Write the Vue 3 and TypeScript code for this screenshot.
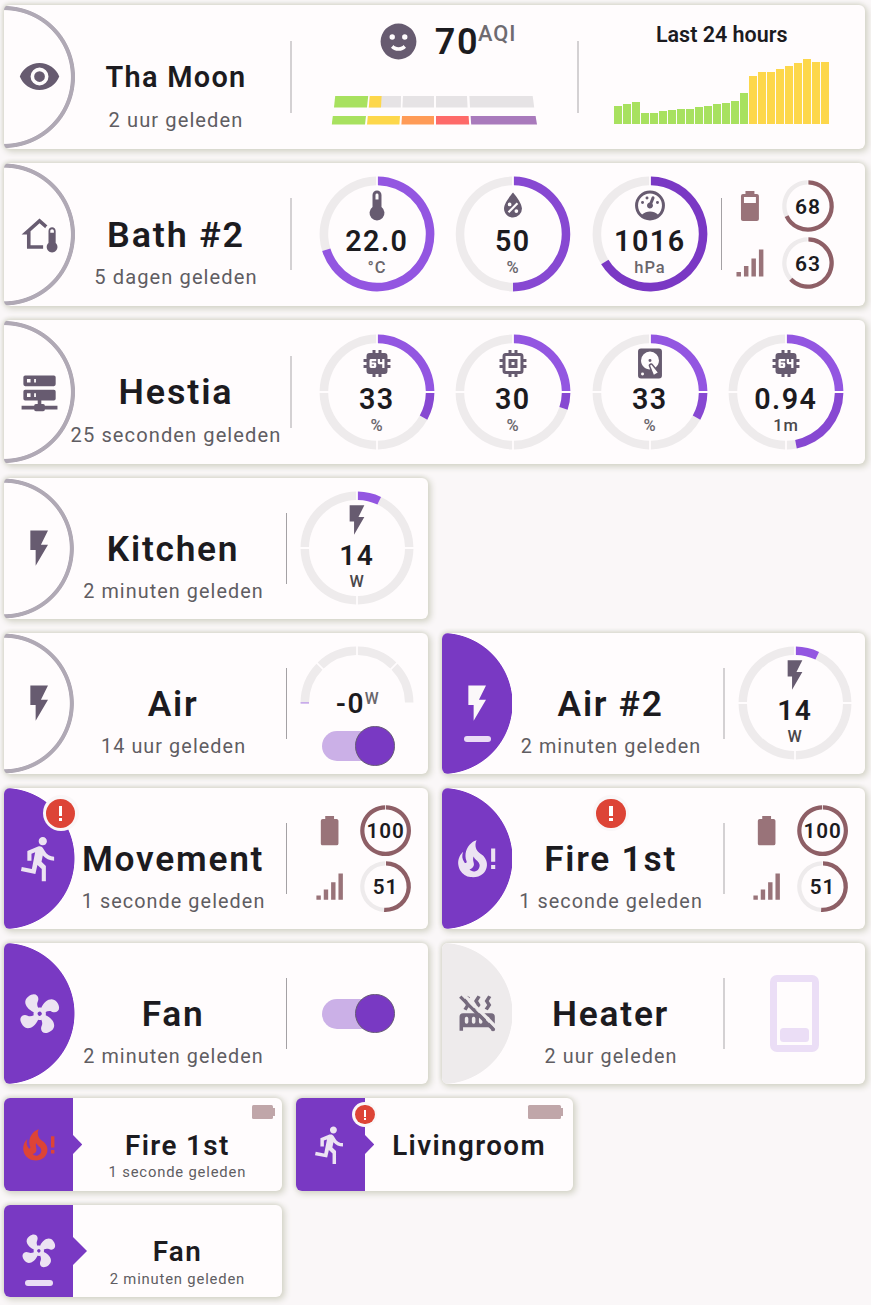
<script setup lang="ts">
import { defineComponent, h } from 'vue'

type Seg = { d: string; c: string }
interface Gauge { icon: string; value: string; unit: string; pct: number; quarters?: boolean; colors: string[] }
interface Status { battery: string; level: number; signal: number }
interface Tile {
  name: string
  ago: string
  icon: string
  iconScale?: number
  look: 'ring' | 'on' | 'off'
  bar?: boolean
  badge?: 'avatar' | 'title'
  gauges?: Gauge[]
  status?: Status
  kind?: 'aqi' | 'power' | 'switch' | 'slider'
  thin?: boolean
}

const paths: Record<string, string> = {
  eye: 'M12,9A3,3 0 0,0 9,12A3,3 0 0,0 12,15A3,3 0 0,0 15,12A3,3 0 0,0 12,9M12,17A5,5 0 0,1 7,12A5,5 0 0,1 12,7A5,5 0 0,1 17,12A5,5 0 0,1 12,17M12,4.5C7,4.5 2.73,7.61 1,12C2.73,16.39 7,19.5 12,19.5C17,19.5 21.27,16.39 23,12C21.27,7.61 17,4.5 12,4.5Z',
  homeTemp: 'M19 8C20.11 8 21 8.9 21 10V16.76C21.61 17.31 22 18.11 22 19C22 20.66 20.66 22 19 22C17.34 22 16 20.66 16 19C16 18.11 16.39 17.31 17 16.76V10C17 8.9 17.9 8 19 8M19 9C18.45 9 18 9.45 18 10V11H20V10C20 9.45 19.55 9 19 9M12 5.69L7 10.19V18H14V20H5V12H2L12 3L16.4 6.96C15.84 7.4 15.4 8 15.18 8.55L12 5.69Z',
  server: 'M13,19H14A1,1 0 0,1 15,20H22V22H15A1,1 0 0,1 14,23H10A1,1 0 0,1 9,22H2V20H9A1,1 0 0,1 10,19H11V17H4A1,1 0 0,1 3,16V12A1,1 0 0,1 4,11H20A1,1 0 0,1 21,12V16A1,1 0 0,1 20,17H13V19M4,3H20A1,1 0 0,1 21,4V8A1,1 0 0,1 20,9H4A1,1 0 0,1 3,8V4A1,1 0 0,1 4,3M9,7H10V5H9V7M9,15H10V13H9V15M5,5V7H7V5H5M5,13V15H7V13H5Z',
  flash: 'M7,2V13H10V22L17,10H13L17,2H7Z',
  emoticon: 'M12,2A10,10 0 0,0 2,12A10,10 0 0,0 12,22A10,10 0 0,0 22,12A10,10 0 0,0 12,2M15.5,8A1.5,1.5 0 0,1 17,9.5A1.5,1.5 0 0,1 15.5,11A1.5,1.5 0 0,1 14,9.5A1.5,1.5 0 0,1 15.5,8M8.5,8A1.5,1.5 0 0,1 10,9.5A1.5,1.5 0 0,1 8.5,11A1.5,1.5 0 0,1 7,9.5A1.5,1.5 0 0,1 8.5,8M12,17.23C10.25,17.23 8.71,16.5 7.81,15.42L9.23,14C9.68,14.72 10.75,15.23 12,15.23C13.25,15.23 14.32,14.72 14.77,14L16.19,15.42C15.29,16.5 13.75,17.23 12,17.23Z',
  thermometer: 'M15 13V5A3 3 0 0 0 9 5V13A5 5 0 1 0 15 13M12 4A1 1 0 0 1 13 5V8H11V5A1 1 0 0 1 12 4Z',
  humidity: 'M12,3.25C12,3.25 6,10 6,14C6,17.32 8.69,20 12,20A6,6 0 0,0 18,14C18,10 12,3.25 12,3.25M14.47,9.97L15.53,11.03L9.53,17.03L8.47,15.97M9.75,10A1.25,1.25 0 0,1 11,11.25A1.25,1.25 0 0,1 9.75,12.5A1.25,1.25 0 0,1 8.5,11.25A1.25,1.25 0 0,1 9.75,10M14.25,14.5A1.25,1.25 0 0,1 15.5,15.75A1.25,1.25 0 0,1 14.25,17A1.25,1.25 0 0,1 13,15.75A1.25,1.25 0 0,1 14.25,14.5Z',
  gauge: 'M12,2A10,10 0 0,0 2,12A10,10 0 0,0 12,22A10,10 0 0,0 22,12A10,10 0 0,0 12,2M12,4A8,8 0 0,1 20,12C20,14.4 19,16.5 17.3,18C15.9,16.7 14,16 12,16C10,16 8.2,16.7 6.7,18C5,16.5 4,14.4 4,12A8,8 0 0,1 12,4M14,5.89C13.62,5.9 13.26,6.15 13.1,6.54L11.81,9.77L11.71,10C11,10.13 10.41,10.6 10.14,11.26C9.73,12.29 10.23,13.45 11.26,13.86C12.29,14.27 13.45,13.77 13.86,12.74C14.12,12.08 14,11.32 13.57,10.76L13.67,10.5L14.96,7.29L14.97,7.26C15.17,6.75 14.92,6.17 14.41,5.96C14.28,5.91 14.15,5.89 14,5.89M10,6A1,1 0 0,0 9,7A1,1 0 0,0 10,8A1,1 0 0,0 11,7A1,1 0 0,0 10,6M7,9A1,1 0 0,0 6,10A1,1 0 0,0 7,11A1,1 0 0,0 8,10A1,1 0 0,0 7,9M17,9A1,1 0 0,0 16,10A1,1 0 0,0 17,11A1,1 0 0,0 18,10A1,1 0 0,0 17,9Z',
  cpu64: 'M9,3V5H7A2,2 0 0,0 5,7V9H3V11H5V13H3V15H5V17A2,2 0 0,0 7,19H9V21H11V19H13V21H15V19H17A2,2 0 0,0 19,17V15H21V13H19V11H21V9H19V7A2,2 0 0,0 17,5H15V3H13V5H11V3M8,9H11.5V10.5H8.5V11.25H10.5A1,1 0 0,1 11.5,12.25V14A1,1 0 0,1 10.5,15H8A1,1 0 0,1 7,14V10A1,1 0 0,1 8,9M12.5,9H14V11H15.5V9H17V15H15.5V12.5H13.5A1,1 0 0,1 12.5,11.5M8.5,12.75V13.5H10V12.75',
  memory: 'M17,17H7V7H17M21,11V9H19V7C19,5.89 18.1,5 17,5H15V3H13V5H11V3H9V5H7C5.89,5 5,5.89 5,7V9H3V11H5V13H3V15H5V17A2,2 0 0,0 7,19H9V21H11V19H13V21H15V19H17A2,2 0 0,0 19,17V15H21V13H19V11M13,13H11V11H13M15,9H9V15H15V9Z',
  disk: 'M6,2H18A2,2 0 0,1 20,4V20A2,2 0 0,1 18,22H6A2,2 0 0,1 4,20V4A2,2 0 0,1 6,2M12,4A6,6 0 0,0 6,10C6,13.31 8.69,16 12.1,16L11.22,13.77C10.95,13.29 11.11,12.68 11.59,12.4L12.45,11.9C12.93,11.63 13.54,11.79 13.82,12.27L15.74,14.69C17.12,13.59 18,11.9 18,10A6,6 0 0,0 12,4M12,9A1,1 0 0,1 13,10A1,1 0 0,1 12,11A1,1 0 0,1 11,10A1,1 0 0,1 12,9M7,18A1,1 0 0,0 6,19A1,1 0 0,0 7,20A1,1 0 0,0 8,19A1,1 0 0,0 7,18M12.09,13.27L14.58,19.58L17.17,18.08L12.95,12.77L12.09,13.27Z',
  battery70: 'M16,10H8V6H16M16.67,4H15V2H9V4H7.33A1.33,1.33 0 0,0 6,5.33V20.67C6,21.4 6.6,22 7.33,22H16.67A1.33,1.33 0 0,0 18,20.67V5.33C18,4.6 17.4,4 16.67,4Z',
  battery: 'M16.67,4H15V2H9V4H7.33A1.33,1.33 0 0,0 6,5.33V20.67C6,21.4 6.6,22 7.33,22H16.67A1.33,1.33 0 0,0 18,20.67V5.33C18,4.6 17.4,4 16.67,4Z',
  signal: 'M3,21H6V18H3M8,21H11V14H8M13,21H16V9H13M18,21H21V3H18V21Z',
  run: 'M13.5,5.5C14.59,5.5 15.5,4.58 15.5,3.5C15.5,2.38 14.59,1.5 13.5,1.5C12.39,1.5 11.5,2.38 11.5,3.5C11.5,4.58 12.39,5.5 13.5,5.5M9.89,19.38L10.89,15L13,17V23H15V15.5L12.89,13.5L13.5,10.5C14.79,12 16.79,13 19,13V11C17.09,11 15.5,10 14.69,8.58L13.69,7C13.29,6.38 12.69,6 12,6C11.69,6 11.5,6.08 11.19,6.08L6,8.28V13H8V9.58L9.79,8.88L8.19,17L3.29,16L2.89,18L9.89,19.38Z',
  fan: 'M12,11A1,1 0 0,0 11,12A1,1 0 0,0 12,13A1,1 0 0,0 13,12A1,1 0 0,0 12,11M12.5,2C17,2 17.11,5.57 14.75,6.75C13.76,7.24 13.32,8.29 13.13,9.22C13.61,9.42 14.03,9.73 14.35,10.13C18.05,8.13 22.03,8.92 22.03,12.5C22.03,17 18.46,17.1 17.28,14.73C16.78,13.74 15.72,13.3 14.79,13.11C14.59,13.59 14.28,14 13.88,14.34C15.87,18.03 15.08,22 11.5,22C7,22 6.91,18.42 9.27,17.24C10.25,16.75 10.69,15.71 10.89,14.79C10.4,14.59 9.97,14.27 9.65,13.87C5.96,15.85 2,15.07 2,11.5C2,7 5.56,6.89 6.74,9.26C7.24,10.25 8.29,10.68 9.22,10.87C9.41,10.39 9.73,9.97 10.14,9.65C8.15,5.96 8.94,2 12.5,2Z',
  fire: 'M15.66 11.2C15.43 10.9 15.15 10.64 14.89 10.38C14.22 9.78 13.46 9.35 12.82 8.72C11.33 7.26 11 4.85 11.95 3C11 3.23 10.17 3.75 9.46 4.32C6.87 6.4 5.85 10.07 7.07 13.22C7.11 13.32 7.15 13.42 7.15 13.55C7.15 13.77 7 13.97 6.8 14.05C6.57 14.15 6.33 14.09 6.14 13.93C6.08 13.88 6.04 13.83 6 13.76C4.87 12.33 4.69 10.28 5.45 8.64C3.78 10 2.87 12.3 3 14.47C3.06 14.97 3.12 15.47 3.29 15.97C3.43 16.57 3.7 17.17 4 17.7C5.08 19.43 6.95 20.67 8.96 20.92C11.1 21.19 13.39 20.8 15.03 19.32C16.86 17.66 17.5 15 16.56 12.72L16.43 12.46C16.22 12 15.66 11.2 15.66 11.2M12.5 17.5C12.22 17.74 11.76 18 11.4 18.1C10.28 18.5 9.16 17.94 8.5 17.28C9.69 17 10.4 16.12 10.61 15.23C10.78 14.43 10.46 13.77 10.33 13C10.21 12.26 10.23 11.63 10.5 10.94C10.69 11.32 10.89 11.7 11.13 12C11.9 13 13.11 13.44 13.37 14.8C13.41 14.94 13.43 15.08 13.43 15.23C13.46 16.05 13.1 16.95 12.5 17.5ZM19 7V13.5H21V7M19 17H21V15H19Z',
  radiator: 'M7.95,3L6.53,5.19L7.95,7.4H7.94L5.95,10.5L4.22,9.6L5.64,7.39L4.22,5.19L6.22,2.09L7.95,3M13.95,2.89L12.53,5.1L13.95,7.3L13.94,7.31L11.95,10.4L10.22,9.5L11.64,7.3L10.22,5.1L12.22,2L13.95,2.89M20,2.89L18.56,5.1L20,7.3V7.31L18,10.4L16.25,9.5L17.67,7.3L16.25,5.1L18.25,2L20,2.89M2,22V14A2,2 0 0,1 4,12H20A2,2 0 0,1 22,14V22H20V20H4V22H2M6,14A1,1 0 0,0 5,15V17A1,1 0 0,0 6,18A1,1 0 0,0 7,17V15A1,1 0 0,0 6,14M10,14A1,1 0 0,0 9,15V17A1,1 0 0,0 10,18A1,1 0 0,0 11,17V15A1,1 0 0,0 10,14M14,14A1,1 0 0,0 13,15V17A1,1 0 0,0 14,18A1,1 0 0,0 15,17V15A1,1 0 0,0 14,14M18,14A1,1 0 0,0 17,15V17A1,1 0 0,0 18,18A1,1 0 0,0 19,17V15A1,1 0 0,0 18,14Z',
}

/** 24-unit icon; the radiator gets a slash, the fan is caught mid-turn. */
const Glyph = defineComponent({
  props: { name: { type: String, required: true }, size: { type: Number, required: true } },
  setup: (p) => () =>
    h('svg', { class: 'glyph', width: p.size, height: p.size, viewBox: '0 0 24 24', fill: 'currentColor' }, [
      h('path', { d: paths[p.name], 'fill-rule': 'evenodd', transform: p.name === 'fan' ? 'rotate(-37 12 12)' : undefined }),
      ...(p.name === 'radiator'
        ? [
            h('path', { d: 'M3 0.2L23.6 20.8', stroke: '#eeebec', 'stroke-width': 1.9, fill: 'none' }),
            h('path', { d: 'M2.4 2.6L21.6 21.8', stroke: 'currentColor', 'stroke-width': 1.8, fill: 'none' }),
          ]
        : []),
    ]),
})

/** Arc band between two clockwise angles, with flat ends inset by half a gap. */
function band(r: number, w: number, a: number, b: number, gapA = 0, gapB = 0): string {
  const pt = (rad: number, deg: number, off: number) => {
    const t = (deg * Math.PI) / 180 + off / rad
    return `${(rad * Math.sin(t)).toFixed(2)} ${(-rad * Math.cos(t)).toFixed(2)}`
  }
  const big = b - a > 180 ? 1 : 0
  const q = r - w
  return `M${pt(r, a, gapA)}A${r} ${r} 0 ${big} 1 ${pt(r, b, -gapB)}L${pt(q, b, -gapB)}A${q} ${q} 0 ${big} 0 ${pt(q, a, gapA)}Z`
}

const TRACK = '#eeebec'

function gaugeSegs(g: Gauge): Seg[] {
  const end = g.pct * 3.6
  const out: Seg[] = []
  const step = g.quarters ? 90 : 360
  for (let i = 0; i < 360 / step; i++) {
    const a = i * step
    const b = a + step
    if (end <= a) out.push({ d: band(57.4, 8.6, a, b, 0.9, 0.9), c: TRACK })
    else if (end >= b) out.push({ d: band(57.4, 8.6, a, b, 0.9, 0.9), c: g.colors[i] })
    else {
      out.push({ d: band(57.4, 8.6, end, b, 0, 0.9), c: TRACK })
      out.push({ d: band(57.4, 8.6, a, end, 0.9, 0), c: g.colors[i] })
    }
  }
  return out
}

function miniSegs(v: number): Seg[] {
  const fill = '#8e5f66'
  if (v >= 100) return [{ d: band(25.8, 4.3, 0, 360, 0.4, 0.4), c: fill }]
  return [
    { d: band(25.8, 4.3, v * 3.6, 360, 0, 0.4), c: TRACK },
    { d: band(25.8, 4.3, 0, v * 3.6, 0.4, 0), c: fill },
  ]
}

const halfArc = [0, 1, 2, 3].map((i) =>
  band(57.4, 8.6, -90 + i * 45, -45 + i * 45, i === 0 ? 0.6 : 0.9, i === 3 ? 0.6 : 0.9),
)

const light = '#9356e1'
const mid = '#8748d2'
const deep = '#7a38c4'

const wide: Tile[] = [
  { name: 'Tha Moon', ago: '2 uur geleden', icon: 'eye', look: 'ring', kind: 'aqi' },
  {
    name: 'Bath #2', ago: '5 dagen geleden', icon: 'homeTemp', look: 'ring',
    gauges: [
      { icon: 'thermometer', value: '22.0', unit: '°C', pct: 70.2, colors: [light] },
      { icon: 'humidity', value: '50', unit: '%', pct: 50, colors: [mid] },
      { icon: 'gauge', value: '1016', unit: 'hPa', pct: 66.2, colors: [deep] },
    ],
    status: { battery: 'battery70', level: 68, signal: 63 },
  },
  {
    name: 'Hestia', ago: '25 seconden geleden', icon: 'server', look: 'ring',
    gauges: [
      { icon: 'cpu64', value: '33', unit: '%', pct: 33, quarters: true, colors: [light, mid] },
      { icon: 'memory', value: '30', unit: '%', pct: 30, quarters: true, colors: [light, mid] },
      { icon: 'disk', value: '33', unit: '%', pct: 33, quarters: true, colors: [light, mid] },
      { icon: 'cpu64', value: '0.94', unit: '1m', pct: 47, quarters: true, colors: [light, mid] },
    ],
  },
]

const watt: Gauge = { icon: 'flash', value: '14', unit: 'W', pct: 7, quarters: true, colors: [light] }

const half: Tile[] = [
  { name: 'Kitchen', ago: '2 minuten geleden', icon: 'flash', look: 'ring', gauges: [watt], thin: true },
  { name: 'Air', ago: '14 uur geleden', icon: 'flash', look: 'ring', kind: 'power', thin: true },
  { name: 'Air #2', ago: '2 minuten geleden', icon: 'flash', look: 'on', bar: true, gauges: [watt] },
  { name: 'Movement', ago: '1 seconde geleden', icon: 'run', iconScale: 0.35, look: 'on', badge: 'avatar', status: { battery: 'battery', level: 100, signal: 51 }, thin: true },
  { name: 'Fire 1st', ago: '1 seconde geleden', icon: 'fire', iconScale: 0.35, look: 'on', badge: 'title', status: { battery: 'battery', level: 100, signal: 51 } },
  { name: 'Fan', ago: '2 minuten geleden', icon: 'fan', iconScale: 0.35, look: 'on', kind: 'switch', thin: true },
  { name: 'Heater', ago: '2 uur geleden', icon: 'radiator', look: 'off', kind: 'slider' },
]

interface Chip { name: string; ago?: string; icon: string; alert?: boolean; battery?: number; inset?: number; badge?: boolean; bar?: boolean }
const chips: Chip[] = [
  { name: 'Fire 1st', ago: '1 seconde geleden', icon: 'fire', alert: true, battery: 23.3, inset: 6.7 },
  { name: 'Livingroom', icon: 'run', battery: 35, inset: 10.3, badge: true },
  { name: 'Fan', ago: '2 minuten geleden', icon: 'fan', bar: true },
]

const rows = [
  { tiles: wide, cls: 'wide', h: 143.5 },
  { tiles: half, cls: 'half', h: 141.17 },
]

const scaleColors = ['#a8e15f', '#fdd74b', '#ff9b57', '#fe6a69', '#a97abc']
const scaleTop = ['M335.2 96H368.2L367 107.4H334Z', 'M369.8 96H401L400.8 107.4H368.8Z', 'M403 96H434V107.4H402.4Z', 'M436 96H467L467.6 107.4H436Z', 'M469.4 96H532.7L534.2 107.4H470Z']
const scaleBottom = ['M332.8 116H366L365 124.4H331.8Z', 'M367.8 116H400L399.4 124.4H367Z', 'M402 116H434V124.4H401.4Z', 'M436 116H468.6L469.2 124.4H436Z', 'M470.6 116H535.6L537 124.4H471.2Z']

const history = [17.7, 19.8, 21.7, 11, 11, 12.9, 13.9, 14.8, 14.8, 16.7, 17.8, 19.8, 20.8, 22.9, 30.9, 48, 52, 52, 54.6, 58, 60.8, 65.3, 62, 62]
</script>

<template>
  <main class="board">
    <section v-for="row in rows" :key="row.cls" class="grid" :class="row.cls">
      <article v-for="t in row.tiles" :key="t.name" class="card" :class="[t.name === 'Kitchen' ? 'solo' : '', t.kind ? 'is-' + t.kind : '']">
        <div class="avatar" :class="t.look">
          <Glyph :name="t.icon" :size="row.h * (t.iconScale ?? 0.3)" />
          <span v-if="t.bar" class="pill" />
          <span v-if="t.badge === 'avatar'" class="badge"><i /></span>
        </div>
        <div class="title">
          <h2>{{ t.name }}</h2>
          <p>{{ t.ago }}</p>
          <span v-if="t.badge === 'title'" class="badge"><i /></span>
        </div>
        <div class="rule" :class="{ thin: t.thin }" />

        <template v-if="t.kind === 'aqi'">
          <div class="aqi">
            <div class="reading">
              <Glyph name="emoticon" :size="43" />
              <strong>70</strong><sup>AQI</sup>
            </div>
            <svg width="210" height="32" viewBox="330 94 210 32">
              <path v-for="(d, i) in scaleTop" :key="i" :d="d" :fill="i === 0 ? scaleColors[0] : '#e6e3e5'" />
              <path d="M369.8 96H381.6L381 107.4H368.8Z" :fill="scaleColors[1]" />
              <path v-for="(d, i) in scaleBottom" :key="'b' + i" :d="d" :fill="scaleColors[i]" />
            </svg>
          </div>
          <div class="rule second" />
          <div class="history">
            <h3>Last 24 hours</h3>
            <div class="bars">
              <b v-for="(v, i) in history" :key="i" :class="{ hot: i > 14 }" :style="{ height: v + 'px' }" />
            </div>
          </div>
        </template>

        <div v-if="t.gauges" class="gauges">
          <svg v-for="(g, i) in t.gauges" :key="i" class="gauge" viewBox="-60 -60 120 120">
            <path v-for="(s, k) in gaugeSegs(g)" :key="k" :d="s.d" :fill="s.c" />
            <g class="dark" transform="translate(0 -28.5) scale(1.495) translate(-12 -12)">
              <path :d="paths[g.icon]" fill-rule="evenodd" />
            </g>
            <text class="val" x="-0.2" y="17.4">{{ g.value }}</text>
            <text class="unit" :class="{ strong: g.unit === 'W' || g.unit === '1m' }" x="0" :y="g.unit === 'W' ? 39.5 : 38.9">{{ g.unit }}</text>
          </svg>
        </div>

        <template v-if="t.status">
          <div v-if="t.gauges" class="rule thin" />
          <div class="status">
            <template v-for="(v, k) in [t.status.level, t.status.signal]" :key="k">
              <Glyph :name="k ? 'signal' : t.status.battery" :size="row.h / 4" />
              <svg class="mini" viewBox="-26 -26 52 52">
                <path v-for="(s, j) in miniSegs(v)" :key="j" :d="s.d" :fill="s.c" />
                <text y="7.8">{{ v }}</text>
              </svg>
            </template>
          </div>
        </template>

        <div v-if="t.kind === 'power'" class="power">
          <svg class="arc" viewBox="-60 -60 120 62">
            <path v-for="(d, i) in halfArc" :key="i" :d="d" :fill="TRACK" />
            <rect x="-57.4" y="-1" width="8.6" height="1.7" fill="#c8aaea" />
          </svg>
          <div class="amount"><strong>-0</strong><sup>W</sup></div>
          <div class="switch"><i /></div>
        </div>
        <div v-if="t.kind === 'switch'" class="side"><div class="switch"><i /></div></div>
        <div v-if="t.kind === 'slider'" class="side"><div class="slider"><i /></div></div>
      </article>
    </section>

    <section class="grid third">
      <article v-for="c in chips" :key="c.name" class="card" :class="{ last: c.bar }">
        <div class="flag" :class="{ alert: c.alert }">
          <Glyph :name="c.icon" :size="41.65" />
          <span v-if="c.bar" class="pill" />
          <svg class="arrow" :class="{ large: c.bar }" viewBox="0 0 10 20" preserveAspectRatio="none"><path d="M0 0L10 10L0 20Z" /></svg>
          <span v-if="c.badge" class="badge small"><i /></span>
        </div>
        <div class="title">
          <h2>{{ c.name }}</h2>
          <p v-if="c.ago">{{ c.ago }}</p>
        </div>
        <div v-if="c.battery" class="cell" :style="{ width: c.battery + 'px', right: c.inset + 'px' }"><i /></div>
      </article>
    </section>
  </main>
</template>

<style>
body { margin: 0; background: #faf7f8; }
</style>

<style scoped>
.board {
  box-sizing: border-box;
  width: 871px;
  height: 1305px;
  padding: 5px 6px 0 4px;
  display: flex;
  flex-direction: column;
  gap: 14px;
  overflow: hidden;
  font-family: Roboto, "Liberation Sans", sans-serif;
  color: #1c1b1f;
}
.grid { display: grid; gap: 14px; }
.wide { grid-template-columns: 861px; grid-auto-rows: 143.5px; --h: 143.5px; }
.half { grid-template-columns: 423.5px 423.5px; grid-auto-rows: 141.17px; --h: 141.17px; }
.third { grid-template-columns: repeat(3, 277.67px); grid-auto-rows: 92.56px; }
.solo, .solo + .card, .last { grid-column: 1; }

.card {
  position: relative;
  display: flex;
  background: #fffcfd;
  border-radius: 6px;
  box-shadow: 2px 2px 6px 0.5px #d4d4c8, -1px -1px 4px #d8d8cd;
}
.glyph { display: block; flex: none; }

.avatar {
  position: relative;
  flex: none;
  box-sizing: border-box;
  width: calc(var(--h) / 2);
  height: var(--h);
  display: flex;
  align-items: center;
  justify-content: center;
  color: #675b70;
}
.avatar.ring::before {
  content: "";
  position: absolute;
  inset: 0;
  border-radius: 5px 0 0 5px;
  background: radial-gradient(circle at 0 50%, transparent calc(var(--h) * 0.463), #b0a9b5 calc(var(--h) * 0.463 + 0.8px), #b0a9b5 calc(var(--h) * 0.492), transparent calc(var(--h) * 0.492 + 0.8px));
}
.avatar.on, .avatar.off { border-radius: 6px 0 0 6px; }
.avatar.on { background: radial-gradient(circle at 0 50%, #7939c3 calc(var(--h) / 2 - 0.5px), transparent calc(var(--h) / 2 + 0.3px)); color: #ece3f2; }
.avatar.off { background: radial-gradient(circle at 0 50%, #eeebec calc(var(--h) / 2 - 0.5px), transparent calc(var(--h) / 2 + 0.3px)); color: #756a7d; }
.avatar:has(.pill) { color: #fbf8f9; }
.pill {
  position: absolute;
  left: 22px;
  top: 103.3px;
  width: 27px;
  height: 5.7px;
  border-radius: 3px;
  background: #eadcf5;
}
.badge {
  position: absolute;
  left: 38.5px;
  top: 7.5px;
  width: 36px;
  height: 36px;
  border-radius: 50%;
  background: #faf7f8;
  display: grid;
  place-items: center;
}
.badge::before {
  content: "";
  grid-area: 1 / 1;
  width: 29.6px;
  height: 29.6px;
  border-radius: 50%;
  background: #dd4436;
}
.badge i {
  grid-area: 1 / 1;
  width: 3.4px;
  height: 15px;
  background: linear-gradient(#fff 0 9.6px, transparent 9.6px 11.8px, #fff 11.8px);
}

.title { position: relative; flex: none; text-align: center; white-space: nowrap; }
.title h2, .title p { margin: 0; }
.title h2 { font-weight: 600; }
.title p { color: #605d62; }
.wide .title { width: 201px; padding-top: 50.4px; margin-left: -0.25px; }
.wide h2 { font-size: 35.9px; line-height: 44px; letter-spacing: 1.85px; }
.wide .is-aqi h2 { font-size: 28.9px; line-height: 44px; letter-spacing: 1.3px; }
.wide p { font-size: 20.1px; line-height: 24px; letter-spacing: 1.08px; padding-top: 8.2px; margin: 0 -10px; }
.half .title { width: 201px; margin-left: -2px; padding-top: 49.3px; }
.half h2 { font-size: 35.3px; line-height: 44px; letter-spacing: 1.75px; }
.half p { font-size: 19.8px; line-height: 24px; letter-spacing: 1.08px; padding-top: 9px; margin-right: -1px; }
.half .title .badge { left: 83px; }

.rule { flex: none; width: 2px; height: 72px; align-self: center; margin-left: 13.75px; background: #d4d1d3; }
.half .rule { height: 71px; margin-left: 11.5px; }
.rule.thin, .half .rule.thin { width: 1px; background: #a4a1a4; }
.half .rule.thin { margin-left: 12.5px; }
.wide .rule.thin { margin-left: 11.7px; }

.is-aqi .rule.second { margin-left: 0; }
.aqi { width: 285px; display: flex; flex-direction: column; align-items: center; }
.reading { display: flex; height: 72px; align-self: flex-start; margin: 0 0 0 85px; padding-top: 14.7px; box-sizing: border-box; color: #675b70; }
.reading strong { margin-left: 14.5px; font-weight: 600; font-size: 36px; line-height: 44px; letter-spacing: 1.6px; color: #1c1b1f; }
.reading sup { margin-left: -1.2px; font-weight: 500; font-size: 21.8px; line-height: 27.4px; letter-spacing: 1px; color: #6e6b70; }
.aqi > svg { margin-top: 17px; }
.history { margin-left: 34px; width: 218px; }
.history h3 { margin: 16px 1px 0 0; font-weight: 600; font-size: 21.5px; line-height: 28px; text-align: center; }
.bars { display: flex; align-items: flex-end; gap: 1px; height: 70px; margin-top: 5px; margin-left: 1px; }
.bars b { width: 8px; background: #a8e15f; }
.bars b.hot { background: #fdd74b; }

.gauges { display: flex; align-items: center; gap: 16.3px; }
.wide .gauges { margin-left: 24.8px; }
.half .gauges { margin-left: 11px; }
.gauge { width: 120px; height: 120px; display: block; flex: none; }
.half .gauge { width: 118px; height: 118px; }
.dark { fill: #675b70; }
.gauge text, .mini text { text-anchor: middle; font-weight: 500; fill: #1c1b1f; }
.gauge .val { font-size: 28.7px; font-weight: 600; letter-spacing: 1.5px; }
.gauge .unit { font-size: 16.5px; letter-spacing: 1px; fill: #6a666b; }
.gauge .unit.strong { fill: #4a474b; }

.status {
  display: grid;
  grid-template-columns: 56px 52px;
  grid-template-rows: 52px 52px;
  row-gap: 5.2px;
  column-gap: 4px;
  align-content: center;
  align-items: center;
  justify-items: center;
  color: #997379;
}
.half .status { margin-left: 14.2px; column-gap: 2.5px; grid-template-rows: 51.2px 51.2px; }
.half .rule:not(.thin) + .status { column-gap: 1.6px; }
.mini { width: 52px; height: 52px; display: block; overflow: visible; }
.half .mini { width: 51.2px; height: 51.2px; }
.mini text { font-size: 21px; font-weight: 600; letter-spacing: 1px; }

.side { flex: 1; display: flex; align-items: center; justify-content: center; }
.is-switch .side { padding-left: 2px; }
.switch { position: relative; flex: none; width: 72px; height: 30px; border-radius: 15px; background: linear-gradient(90deg, #cbb0e7 60px, transparent 60px); }
.switch i { position: absolute; right: -0.5px; top: -4.6px; width: 37.4px; height: 37.4px; border: 1px solid #665a76; border-radius: 50%; background: #7939c3; }
.slider { box-sizing: border-box; width: 49px; height: 77.3px; border: 7px solid #ebdef6; border-radius: 7px; display: flex; align-items: flex-end; justify-content: center; padding-bottom: 3.3px; }
.slider i { width: 29px; height: 14.3px; border-radius: 3.5px; background: #ebdef6; }
.power { margin-left: 11.2px; width: 118px; display: flex; flex-direction: column; align-items: center; padding-top: 11.6px; }
.arc { display: block; flex: none; width: 118px; height: 61px; }
.amount { display: flex; margin-top: -19.6px; height: 45.3px; }
.amount strong { font-weight: 600; font-size: 28px; line-height: 36px; letter-spacing: 1.4px; }
.amount sup { font-weight: 500; font-size: 15.8px; line-height: 26px; color: #6a666b; }
.power .switch { margin-left: 2px; }

.flag {
  position: relative;
  flex: none;
  width: 69.4px;
  display: flex;
  align-items: center;
  justify-content: center;
  background: #7939c3;
  border-radius: 6px 0 0 6px;
  color: #ece3f2;
}
.flag.alert { color: #dd4436; }
.arrow { position: absolute; left: 100%; top: 36.5px; width: 9.2px; height: 19px; margin-left: -0.4px; fill: #7939c3; }
.arrow.large { width: 14px; height: 28px; top: 32px; }
.flag .pill { left: 20.5px; top: 75.5px; width: 28.8px; height: 5.6px; }
.badge.small { left: 56.8px; top: 4px; width: 25px; height: 25px; }
.badge.small::before { width: 19.6px; height: 19.6px; }
.badge.small i { width: 2.4px; height: 10px; background: linear-gradient(#fff 0 6.6px, transparent 6.6px 8px, #fff 8px); }
.third .title { width: 208px; padding-top: 32.7px; }
.third h2 { font-size: 27.8px; line-height: 30px; letter-spacing: 1.38px; }
.third p { font-size: 14.8px; line-height: 18px; letter-spacing: 0.82px; padding-top: 2.4px; }
.cell { position: absolute; top: 7px; height: 14px; display: flex; align-items: center; }
.cell::before { content: ""; flex: 1; height: 14px; border-radius: 1.5px; background: #c0a6a9; }
.cell i { width: 2.4px; height: 7.4px; background: #c0a6a9; }
</style>
